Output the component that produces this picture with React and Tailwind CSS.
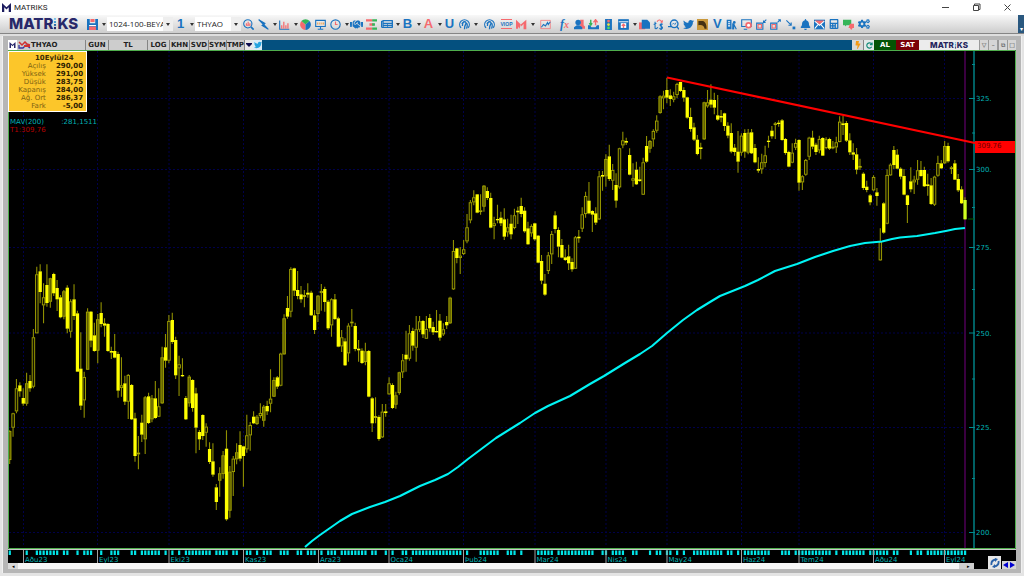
import React from "react";
import { FaTwitter, FaBell, FaCalculator, FaCogs, FaHandshake, FaNewspaper, FaBolt } from "react-icons/fa";

const BLUE = "#1a73c0";
const RED = "#f56a6e";
const GREEN = "#35b558";

/* Each candle: high, body top, body bottom, low, kind (f solid, h hollow, d shaded). Units are thirds of a pixel. */
const SERIES = [
  {
    base: 720,
    data: `571,573,660,672,d 518,520,563,590,h 417,445,514,520,h 427,436,454,470,f 445,474,491,497,f 398,430,491,497,d
405,423,445,455,f 267,292,440,445,h 80,103,280,280,h 73,94,156,190,f 130,172,196,250,h 73,135,189,200,f 113,115,185,203,d
98,102,160,168,f 120,144,178,213,f 165,172,232,235,f 150,154,230,238,d 136,143,266,280,f 178,184,275,293,h 133,178,228,240,f
212,220,395,396,f 277,386,497,510,f 395,411,481,533,h 205,215,389,390,d 213,215,302,322,f 248,286,333,335,f 222,238,332,370,d
187,219,252,262,f 235,250,257,290,f 250,252,333,335,f 320,333,338,357,f 282,333,353,355,f 335,342,452,473,f 352,436,444,470,h
407,430,485,495,f 402,405,485,537,h 432,435,538,540,f 518,535,648,665,f 588,638,643,688,h 524,548,584,606,f 468,472,598,642,d
458,469,549,552,f 465,475,538,547,d 423,475,534,536,f 445,499,530,531,h 320,352,490,492,d 282,322,362,383,f 225,243,362,370,h
218,240,306,312,f 290,300,406,417,f 347,373,385,468,h 355,405,408,410,f 468,474,538,540,f 405,410,490,500,d 418,420,504,515,f
443,460,563,640,f 570,576,598,630,f 523,525,588,600,f 550,560,578,620,h 607,627,666,672,f 610,664,704,710,f 732,742,786,810,f
682,700,722,770,d 633,646,702,716,d 571,626,838,842,f 678,695,812,833,d 648,656,696,768,h 610,637,658,673,d 574,615,656,664,f
617,619,648,740,f 524,586,628,638,h 546,555,586,632,h 514,530,550,552,f`,
  },
  {
    base: 540,
    data: `705,710,732,735,d 670,699,708,715,h 675,680,722,740,d 662,678,694,705,f 568,656,671,697,h 592,600,650,651,d
588,592,620,627,f 518,521,617,619,h 403,415,523,524,d 348,384,410,416,f 262,267,395,412,h 263,265,332,348,f 273,330,348,358,f
318,343,358,368,f 330,346,350,382,f 310,338,344,353,f 332,338,406,408,f 390,406,450,462,f 345,347,402,426,d 312,333,339,392,h
320,327,366,395,f 360,365,445,450,f 355,358,436,470,h 342,358,417,420,f 410,415,500,502,f 450,472,499,516,h 475,484,556,558,f
430,437,520,545,h 387,425,430,440,h 428,438,507,514,f 480,506,511,545,f 505,512,549,552,f 488,514,546,556,d 510,513,650,652,f
652,655,730,756,f 652,709,713,730,f 706,711,777,782,f 672,695,772,774,h 672,694,699,710,f 592,610,643,644,h 610,615,684,687,f
635,646,674,686,d 575,577,639,644,d 522,541,577,594,h 452,524,538,575,f 435,460,536,542,h 443,453,497,512,f 408,448,503,545,h
408,424,449,456,h 420,423,463,474,f 408,447,476,477,h 402,414,445,455,f 425,441,457,465,f 390,453,457,458,f 402,422,473,482,f
430,448,463,468,h 408,426,436,447,f 350,353,430,432,d 180,213,328,330,h 203,205,234,250,f 201,227,234,282,h 180,208,222,225,h
102,142,184,190,h 60,67,121,130,h 31,52,67,76,h 42,43,98,100,f 43,91,96,104,h 15,17,80,95,d 22,33,54,60,f 38,54,143,145,f`,
  },
  {
    base: 210,
    data: `440,460,468,508,h 404,447,451,460,f 425,443,460,468,f 415,448,500,510,f 446,472,487,500,h 434,461,493,508,f
416,436,474,478,h 410,422,427,462,f 383,408,432,442,f 412,422,484,488,f 455,475,523,524,f 463,468,490,500,h 458,460,508,512,f
495,497,578,580,f 555,573,632,643,f 612,641,674,677,f 546,556,603,612,h 483,492,553,582,h 424,436,477,490,f 472,480,530,562,f
507,525,563,565,f 538,562,570,573,f 524,559,580,600,f 565,576,598,605,f 498,502,596,597,h 480,500,505,518,f 412,433,476,486,h
365,378,432,443,h 336,392,430,433,f 421,423,434,486,f 412,430,458,465,f 303,319,448,450,h 303,315,320,362,f 253,267,319,350,d
224,259,327,333,f 282,300,332,360,h 310,345,392,413,f 233,235,352,356,h 185,211,226,235,h 203,213,218,225,f 235,255,314,316,f
280,325,332,350,h 275,299,343,345,f 290,328,333,335,f 263,277,374,375,h 198,228,275,278,f 210,213,236,248,d 178,183,208,230,h
136,152,182,188,h 76,79,129,131,d 62,77,85,118,h 23,60,83,100,f 58,76,87,108,f 65,79,89,97,h 38,42,75,85,h 35,36,63,66,f
52,60,83,95,f 80,82,143,146,f 113,141,177,185,f 158,172,209,213,f 195,209,252,256,f 218,232,237,268,f 95,97,208,210,d`,
  },
  {
    base: 180,
    data: `90,127,139,143,h 73,119,134,143,f 98,120,143,163,f 105,166,179,182,f 150,168,173,187,f 158,160,198,213,f
187,197,227,235,f 190,219,275,280,f 252,263,276,287,f 213,275,305,338,f 220,227,278,287,h 208,219,275,293,f 207,218,278,283,d
207,217,280,282,f 252,264,307,310,f 292,327,332,338,f 281,307,328,341,h 257,286,309,322,h 227,242,246,263,f 198,212,229,236,f
186,190,195,237,h 181,188,192,200,f 177,181,240,242,f 234,237,279,284,f 272,276,320,322,f 250,278,308,310,h 236,249,263,270,h
238,240,368,392,f 346,349,367,390,h 297,300,344,347,h 230,233,290,300,h 212,233,260,268,f 248,254,276,285,f 227,237,271,280,h
232,234,287,288,f 232,238,264,268,h 233,237,266,270,f 243,260,264,268,h 230,247,262,279,h 169,185,246,247,h 168,190,195,225,f
183,189,242,246,f 220,241,277,285,f 250,277,284,300,f 264,283,329,343,f 296,318,323,330,h 337,341,384,390,f 362,380,390,397,f
402,406,427,436,f 346,351,391,394,h 384,397,408,437,f 505,545,601,602,h 427,430,518,521,f 328,345,491,493,h 310,314,346,347,h
258,270,315,327,f 268,284,326,328,f 322,326,350,358,f 327,348,404,406,f 404,406,435,489,f 322,364,388,397,f 347,359,367,402,h
300,331,359,374,h 303,330,348,350,f 320,330,379,381,f 341,373,378,407,f 354,376,432,435,f 347,350,434,438,h 287,309,347,350,h
300,310,325,327,f 243,258,310,312,d 248,258,304,308,f 318,322,327,342,h 300,310,359,360,f 342,357,391,396,f 379,388,430,432,f
412,420,478,479,f`,
  },
];

const CANDLES = SERIES.flatMap(({ base, data }) =>
  data.trim().split(/\s+/).map((item) => {
    const p = item.split(",");
    const y = (n) => (Number(n) + base) / 3;
    return { hi: y(p[0]), top: y(p[1]), bot: y(p[2]), lo: y(p[3]), kind: p[4] };
  })
);

const xAt = (i) => (29 + 10.163 * i) / 3;

/* Runs of sessions marked in the date strip. */
const SESSIONS = [
  [0, 0], [5, 5], [8, 14], [16, 17], [20, 20], [22, 24], [27, 27], [30, 32], [36, 37], [39, 44], [46, 46], [48, 48], [50, 50],
  [52, 59], [61, 64], [66, 67], [70, 71], [73, 73], [75, 77], [80, 82], [85, 86], [88, 90], [92, 92], [94, 96], [98, 105],
  [107, 108], [111, 111], [113, 113], [116, 117], [119, 133], [135, 135], [139, 144], [147, 149], [151, 151], [156, 160],
  [162, 172], [175, 176], [178, 181], [184, 185], [189, 189], [191, 192], [194, 195], [197, 197], [199, 199], [202, 210],
  [212, 213], [215, 215], [217, 224], [228, 230], [232, 242], [244, 244], [246, 252], [254, 259], [261, 262], [266, 266],
  [268, 269], [271, 282],
];
const TICKS = SESSIONS.flatMap(([a, b]) => Array.from({ length: b - a + 1 }, (_, k) => a + k));

const MONTHS = [
  [23.5, "Aðu23"], [97.5, "Eyl23"], [169, "Eki23"], [243.5, "Kas23"], [318.5, "Ara23"], [389, "Oca24"], [463.5, "Þub24"],
  [535, "Mar24"], [606, "Nis24"], [667, "May24"], [741.5, "Haz24"], [799, "Tem24"], [873.5, "Aðu24"], [944.5, "Eyl24"],
];
const LEVELS = [[98.5, "325."], [169.5, "300."], [247.5, "275."], [333, "250."], [427.5, "225."], [532.5, "200."]];
const MINOR = [64.5, 133, 207.5, 289.5, 379, 478.5];

function Chart() {
  return (
    <svg viewBox="8 50 1008 513" className="block h-auto w-full bg-black" role="img" aria-label="THYAO günlük grafik">
      <g stroke="#00004a" strokeWidth="1" strokeDasharray="2 2">
        {MONTHS.map(([x]) => <path key={x} d={`M${x} 51V547`} />)}
        {LEVELS.map(([y]) => <path key={y} d={`M9 ${y}H965`} />)}
      </g>
      <path d="M965 51V548" stroke="#3a0040" strokeWidth="2" />
      <g stroke="#008a8f" strokeWidth="1">
        <path d="M974 51V548" strokeWidth="1.4" />
        {LEVELS.map(([y]) => <path key={y} d={`M969 ${y}H975`} />)}
        {MINOR.map((y) => <path key={y} d={`M972 ${y}H975`} />)}
      </g>
      <g fill="#00b4b6" fontSize="7" fontFamily='"DejaVu Sans", sans-serif'>
        {LEVELS.map(([y, t]) => <text key={t} x="976" y={y + 2.5}>{t}</text>)}
      </g>
      {CANDLES.map((c, i) => {
        const x = xAt(i);
        const solid = c.kind === "f";
        const last = i === CANDLES.length - 1;
        const h = Math.max(c.bot - c.top, 1.3);
        return (
          <g key={i}>
            <path d={`M${x} ${c.hi}V${c.top}M${x} ${c.bot}V${c.lo}`} stroke="#8f8f00" strokeWidth="1.1" />
            {solid ? (
              <rect x={x - 1.6} y={c.top} width="3.3" height={h} fill={last ? "#cfff20" : "#ffff00"} />
            ) : (
              <rect x={x - 1.2} y={c.top + 0.4} width="2.5" height={Math.max(h - 0.8, 0.8)} fill={c.kind === "d" ? "#606000" : "#141400"} stroke="#a8a800" strokeWidth="0.9" />
            )}
          </g>
        );
      })}
      <path d="M968 219H974" stroke="#006000" />
      <polyline
        points="305,547 312,541 320,535 330,528 340,521 352,514 370,507 385,502 400,496 420,486 435,480 448,474 458,467 468,459 480,450 496,438 520,423 535,413 548,406 570,396 590,384 604,376 625,363 640,354 652,346 667,333 683,320 697,310 710,302 720,296 730,292 745,286 758,280 775,271 797,264 815,257 833,251 850,246 865,243 882,241.5 892,239 900,237.5 917,236 935,233 947,230.7 955,229 965,228"
        fill="none"
        stroke="#00f4f4"
        strokeWidth="2.1"
        strokeLinejoin="round"
      />
      <path d="M667 77.5L975 143" stroke="#ff0000" strokeWidth="2.2" />
      <rect x="975" y="141" width="40" height="12" fill="#ff0000" />
      <text x="977" y="148" fontSize="7" fill="#6b0000" fontFamily='"DejaVu Sans", sans-serif'>309.76</text>
      <path d="M8.5 50V548.5H1015.5V50.5H8.5" fill="none" stroke="#4fae4c" />
      <path d="M8 549.5H1016" stroke="#c8c8c8" />
      <g fill="#00e5e8">
        {TICKS.map((i) => <rect key={i} x={xAt(i) - 1} y="550.5" width="2.2" height="4.5" />)}
      </g>
      <g stroke="#a0a0a0">
        {MONTHS.map(([x]) => <path key={x} d={`M${x} 550V563`} />)}
      </g>
      <g fill="#00b4b6" fontSize="7" fontFamily='"DejaVu Sans", sans-serif'>
        {MONTHS.map(([x, t]) => <text key={x} x={x + 1.5} y="561.5">{t}</text>)}
      </g>
    </svg>
  );
}

const Caret = () => (
  <svg viewBox="0 0 4 3" className="h-[3px] w-1" aria-hidden="true"><path d="M0 0H4L2 3Z" fill="#333" /></svg>
);

function Tool({ label, caret, children }) {
  return (
    <button type="button" aria-label={label} className={caret ? "flex h-4 w-[21px] shrink-0 items-center justify-between" : "flex h-4 w-[15px] min-w-[14px] items-center justify-center"}>
      <span className={caret ? "flex w-[15px] justify-center" : "flex justify-center"}>{children}</span>
      {caret && <Caret />}
    </button>
  );
}

const Ic = ({ children }) => (
  <svg viewBox="0 0 16 16" className="h-[11px] w-[11px] shrink-0" fill="none" stroke={BLUE} strokeWidth="1.6" aria-hidden="true">{children}</svg>
);
const Letter = ({ children, red }) => (
  <span className={red ? "font-['Liberation_Sans',sans-serif] text-[13px] font-bold leading-4 text-[#f56a6e]" : "font-['Liberation_Sans',sans-serif] text-[13px] font-bold leading-4 text-[#1a73c0]"}>{children}</span>
);
const Pulse = () => (
  <Ic>
    <path d="M3 13A7 7 0 1 1 13 13" strokeWidth="1.8" />
    <path d="M5 10C5 6 6 4 8 4S11 6 9.5 8S8 11 8 15M11 6C13 8 12 11 11 14M4 7L6 5" strokeWidth="1.9" />
  </Ic>
);

function Logo({ small }) {
  return (
    <span aria-label="MATRIKS" className={small ? "flex items-center font-['Inter',sans-serif] text-[8px] font-extrabold leading-[10px] text-[#24245c]" : "flex items-center font-['Inter',sans-serif] text-[15px] font-extrabold leading-4 text-[#28286a]"}>
      <span>MATR</span>
      <svg viewBox="0 0 4 14" className={small ? "h-[7px] w-[3px]" : "h-3 w-1"} aria-hidden="true">
        <rect x="0.8" y="0" width="2.4" height="2.2" fill="#7fc4ea" /><rect x="0.8" y="3.6" width="2.4" height="2.2" fill="#3d9bd6" />
        <rect x="0.8" y="7" width="2.4" height="2.2" fill="#2469a8" /><rect x="0.8" y="10.4" width="2.4" height="2.6" fill="#28286a" />
      </svg>
      <span>KS</span>
    </span>
  );
}

const MMark = ({ className, fill }) => (
  <svg viewBox="0 0 12 12" className={className} aria-hidden="true"><path d="M0 12V0L6 5.5L12 0V12H9V5.5L6 8.5L3 5.5V12Z" fill={fill} /></svg>
);

function Toolbar() {
  return (
    <div role="toolbar" aria-label="Araçlar" className="flex h-[19px] items-center border-b border-[#858585] bg-linear-to-b from-[#f8f8f8] to-[#cdcdcd] pl-[9px]">
      <div className="w-[76px] shrink-0"><Logo /></div>
      <Tool label="Kaydet" caret>
        <Ic><path d="M0 0H4V6H12V0H16V16H0Z" fill={BLUE} stroke="none" /><path d="M5 0H11V4.5H5ZM3 11H13V16H3Z" fill={RED} stroke="none" /><path d="M3 9.5H13" stroke="#fff" /></Ic>
      </Tool>
      <label className="ml-px flex h-[14px] w-[66px] shrink-0 items-center bg-white">
        <select aria-label="Sayfa" className="h-full w-[56px] appearance-none overflow-hidden pl-[2px] font-['Open_Sans',sans-serif] text-[8px] leading-[14px] text-[#222]"><option>1024-100-BEYAZ</option></select>
        <span className="flex h-full w-[10px] items-center justify-center bg-[#eeeeee]"><Caret /></span>
      </label>
      <Tool label="Pencere 1" caret><Letter>1</Letter></Tool>
      <label className="ml-px flex h-[14px] w-[46px] shrink-0 items-center bg-white">
        <select aria-label="Sembol" className="h-full w-9 appearance-none pl-[2px] font-['Open_Sans',sans-serif] text-[8px] leading-[14px] text-[#222]"><option>THYAO</option></select>
        <span className="flex h-full w-[10px] items-center justify-center bg-[#eeeeee]"><Caret /></span>
      </label>
      <Tool label="Ara"><Ic><circle cx="7" cy="7" r="6" /><path d="M11.5 11.5L15.5 15.5" strokeWidth="2.4" /><path d="M5 9V6M7.5 9V4M10 9V6M4 9H11" stroke={RED} /></Ic></Tool>
      <Tool label="Hızlı emir" caret><Ic><path d="M1 1L10 6.5L8.5 8L15 15L6 9.5L8 8Z" fill={BLUE} /></Ic></Tool>
      <Tool label="Grafik" caret><Ic><path d="M1 2V15H15" /><path d="M4 14V9M7 14V4M10 14V9M13 14V6" stroke={RED} strokeWidth="1.8" /></Ic></Tool>
      <Tool label="Pasta grafik"><Ic><path d="M8 8L2 3A8 8 0 0 0 8 16Z" fill={RED} stroke="none" /><path d="M8 8L2 3A8 8 0 0 1 14 3Z" fill={GREEN} stroke="none" /><path d="M8 8L14 3A8 8 0 0 1 8 16Z" fill={BLUE} stroke="none" /></Ic></Tool>
      <Tool label="Ekran"><Ic><path d="M1 2H15V11H1ZM8 11V14M4 15H12" /><path d="M4 5V8M7 5V8M10 5V8M12.5 5V8" stroke="#f4a24a" /></Ic></Tool>
      <Tool label="Saat" caret><Ic><circle cx="8" cy="8" r="6.8" /><path d="M8 3.5V8H11" stroke={RED} strokeWidth="1.7" /></Ic></Tool>
      <Tool label="Takas"><FaHandshake size={13} color={BLUE} /></Tool>
      <Tool label="Derinlik"><Ic><path d="M0 2H9M5 8H11M0 14H9" stroke={RED} strokeWidth="3.6" /><path d="M9 2H16M9 8H13M9 14H16" stroke={GREEN} strokeWidth="3.6" /></Ic></Tool>
      <Tool label="Haberler" caret><FaNewspaper size={12} color={BLUE} /></Tool>
      <Tool label="B" caret><Letter>B</Letter></Tool>
      <Tool label="A" caret><Letter red>A</Letter></Tool>
      <div className="flex w-[38px] shrink-0"><Tool label="U"><Letter>U</Letter></Tool><Tool label="Analiz" caret><Pulse /></Tool></div>
      <div className="flex w-[19px] shrink-0 justify-center"><Tool label="Analiz 2"><Pulse /></Tool></div>
      <Tool label="VIOP"><span className="border-y border-[#f56a6e] font-['Liberation_Sans',sans-serif] text-[5px] font-bold leading-[8px] text-[#1a73c0]">VIOP</span></Tool>
      <Tool label="Matriks" caret><Ic><path d="M0 14V1L7 8L5 14L3 11V14Z" fill={RED} stroke="none" /><path d="M7 8L15 1V15H11V7L8 11Z" fill={RED} stroke="none" /></Ic></Tool>
      <div className="ml-[3px] flex w-[19px] shrink-0"><Tool label="Çizgi grafik"><Ic><path d="M1 2H15V14H1Z" stroke={RED} strokeWidth="1" /><path d="M2 12L5 8L8 10L11 5L12 8L15 4" /></Ic></Tool></div>
      <Tool label="Formül"><span className="font-['Liberation_Serif',serif] text-[12px] font-bold italic leading-4 text-[#1a73c0]">f<span className="text-[10px] text-[#f56a6e]">x</span></span></Tool>
      <div className="flex w-[299px] shrink-0 justify-between">
        <Tool label="Kişiler"><Ic><path d="M9 1H14V9L16 11V14H9Z" fill={RED} stroke="none" /><circle cx="6" cy="5" r="4" fill={BLUE} stroke="none" /><path d="M0 15V12L4 9H8L12 12V15Z" fill={BLUE} stroke="none" /></Ic></Tool>
        <Tool label="Veri al"><Ic><path d="M0 9V15H16V9H13L11 12H5L3 9Z" fill={BLUE} stroke="none" /><path d="M4 1V9M2 6L4 9L6 6" stroke={GREEN} strokeWidth="2" /><path d="M11 9V2M8 5L11 1L14 5" stroke={RED} strokeWidth="2" /></Ic></Tool>
        <Tool label="Sinyal"><Ic><rect x="3" y="0" width="10" height="16" fill={BLUE} stroke="none" /><circle cx="8" cy="3" r="2" fill={RED} stroke="none" /><circle cx="8" cy="8" r="2" fill="#f3e13b" stroke="none" /><circle cx="8" cy="13" r="2" fill="#4fdc5a" stroke="none" /></Ic></Tool>
        <Tool label="Gönder" caret><Ic><path d="M1 1H15V15H1Z" fill={BLUE} /><path d="M1 4H15" stroke="#dfe9f4" /><path d="M4 6H12V13H4Z" fill="#fff" stroke="none" /><path d="M8 13V8M5.5 10L8 7.5L10.5 10" stroke={RED} strokeWidth="2" /></Ic></Tool>
        <Tool label="Kopyala"><Ic><path d="M0 5H9V15H0Z" fill={RED} stroke="none" /><path d="M4 1H12L16 5V14H4Z" fill={BLUE} stroke="none" /></Ic></Tool>
        <Tool label="Döviz">
          <Ic><path d="M3 4V13C3 15 6 14 7 12M1 8L5 6M14 8C12 6 9 8 11 10S15 12 13 14S10 14 9.5 13M12 6V16" /><path d="M6 4C8 0 12 1 13 5M11 4L13 5L14 2" stroke={RED} /></Ic>
        </Tool>
        <Tool label="Bul"><Ic><circle cx="9" cy="7" r="5.5" strokeWidth="2" /><path d="M13 11L16 15M0 11H5" strokeWidth="2" /><path d="M6 8L8 6L10 8L12 5" strokeWidth="1.2" /></Ic></Tool>
        <Tool label="Twitter"><FaTwitter size={11} color={BLUE} /></Tool>
        <Tool label="Altın"><Ic><rect x="0" y="0" width="16" height="16" fill="#c9983b" stroke="none" /><path d="M2 3H9C12 4 14 8 14 14H11C10 10 8 8 2 9Z" fill="#453112" stroke="none" /></Ic></Tool>
        <Tool label="V"><Letter>V</Letter></Tool>
        <Tool label="Kurum"><Ic><path d="M1 1H8V15H1ZM9 6H12V15H9Z" fill={BLUE} stroke="none" /><path d="M3 4H6M3 7H6M3 10H6" stroke="#fff" /><circle cx="12" cy="5" r="2" fill={BLUE} stroke="none" /><path d="M10 15L12 9L15 15" /></Ic></Tool>
        <Tool label="Ekran ayarları"><Ic><path d="M1 1H15V11H1ZM4 15H9" /><circle cx="11" cy="9" r="3.5" stroke={RED} strokeWidth="2.5" fill="#fff" /></Ic></Tool>
        <Tool label="Küçült"><Ic><path d="M1 6H10V15H1Z" /><path d="M3 8H8V13H3Z" stroke={RED} /><path d="M15 1L11 5M11 2V5H14" /></Ic></Tool>
        <Tool label="Büyüt"><Ic><path d="M1 6H10V15H1Z" /><path d="M3 8H8V13H3Z" stroke={RED} /><path d="M11 5L15 1M12 1H15V4" /></Ic></Tool>
        <Tool label="Taşı"><Ic><path d="M2 2L9 9M9 5V9H5" /><rect x="11" y="11" width="4" height="4" fill={BLUE} stroke="none" /></Ic></Tool>
        <Tool label="Alarm"><FaBell size={11} color={BLUE} /></Tool>
        <Tool label="Posta"><Ic><rect x="0" y="1" width="16" height="14" fill={BLUE} stroke="none" /><path d="M1 2H15L8 8Z" fill={RED} stroke="none" /><path d="M1 3L8 9L15 3M1 14L6 8M15 14L10 8" stroke="#fff" /></Ic></Tool>
        <Tool label="Hesap makinesi"><FaCalculator size={10} color={BLUE} /></Tool>
        <Tool label="Sohbet"><Ic><path d="M0 1H12V9H5L3 11V9H0Z" fill={GREEN} stroke="none" /><path d="M10 7H16V13H14L12 16L10 13H8Z" fill={RED} stroke="none" /></Ic></Tool>
        <Tool label="Ayarlar"><FaCogs size={12} color={BLUE} /></Tool>
      </div>
      <div className="ml-auto flex h-[18px] w-[6px] items-end justify-center bg-[#2a587f] text-[6px] leading-[8px] text-white">▾</div>
    </div>
  );
}

const CELLS = [
  ["GUN", "w-[23px]"], ["TL", "w-[39px]"], ["LOG", "w-[22px]"], ["KHN", "w-5"], ["SVD", "w-[19px]"], ["SYM", "w-[18px]"], ["TMP", "w-[18px]"],
];

function ChartHeader() {
  return (
    <header className="flex h-[10px] bg-[#04507f] font-['DejaVu_Sans',sans-serif] text-[7px] font-bold leading-[10px] text-[#222]">
      <div className="flex w-[77px] items-center bg-[#cdcdcd]">
        <span className="flex h-full w-[9px] items-center justify-center bg-white"><MMark className="h-[6px] w-[7px]" fill="#28286a" /></span>
        <svg viewBox="0 0 13 8" className="ml-px h-2 w-[13px]" fill="none" aria-hidden="true">
          <path d="M1 1L4 4L7 1L9 3L12 4" stroke="#d03030" strokeWidth="1.5" /><path d="M1 4V7H5L8 4L12 7" stroke="#3434a0" strokeWidth="1.3" /><path d="M6 5H12" stroke="#d03030" strokeWidth="2" />
        </svg>
        <span>THYAO</span>
      </div>
      {CELLS.map(([t, w]) => (
        <button key={t} type="button" className={`${w} border-l border-[#858585] bg-[#cdcdcd] text-center`}>{t}</button>
      ))}
      <button type="button" aria-label="Menü" className="flex w-[9px] items-center justify-center border-l border-[#858585] bg-[#e8e8e8]"><svg viewBox="0 0 6 4" className="h-1 w-[6px]"><path d="M0 0H6V1L3 4L0 1Z" fill="#0c0c50" /></svg></button>
      <button type="button" aria-label="Paylaş" className="flex w-[9px] items-center justify-center bg-[#dcebf5]"><FaTwitter size={8} color="#25a3df" /></button>
      <div className="ml-auto flex">
        <button type="button" aria-label="Hızlı" className="flex w-[11px] items-center justify-center bg-[#d8d8d8]"><FaBolt size={8} color="#f39a14" /></button>
        <button type="button" aria-label="Yenile" className="flex w-[11px] items-center justify-center border-l border-[#858585] bg-[#e0e8e6]">
          <svg viewBox="0 0 8 8" className="h-[7px] w-[7px]" fill="none"><path d="M6.5 2.5A3 3 0 1 0 6.5 5.5M4.5 3H7V0.5" stroke="#128a78" strokeWidth="1.3" /></svg>
        </button>
        <button type="button" className="w-[22px] bg-[#045404] text-center text-white">AL</button>
        <button type="button" className="w-[23px] bg-[#7a0008] text-center text-white">SAT</button>
        <div className="flex w-[60px] items-center justify-center bg-[#ececec]"><Logo small /></div>
        <div className="flex w-[37px] justify-between bg-[#9a9a9a] pl-px">
          {["▽", "–", "⧉", "□"].map((s) => (
            <button key={s} type="button" className="flex w-2 items-center justify-center bg-[#d6d6d6] text-[6px] font-normal leading-[8px] text-[#444]">{s}</button>
          ))}
        </div>
      </div>
    </header>
  );
}

const QUOTE = [["Açılış", "290,00"], ["Yüksek", "291,00"], ["Düşük", "283,75"], ["Kapanış", "284,00"], ["Ağ. Ort", "286,37"], ["Fark", "-5,00"]];

function QuoteBox() {
  return (
    <div className="absolute left-0 top-px font-['DejaVu_Sans',sans-serif] text-[7px] leading-[8px]">
      <table className="w-[79px] border-separate border-spacing-0 border border-white bg-[#fcc62a] pb-px">
        <thead><tr><th colSpan={2} className="h-[10px] p-0 pl-[26px] pt-[2px] text-left font-bold text-[#3c2c00]">10Eylül24</th></tr></thead>
        <tbody>
          {QUOTE.map(([k, v]) => (
            <tr key={k}>
              <th scope="row" className="h-2 p-0 text-right font-normal text-[#806414]">{k}</th>
              <td className="h-2 p-0 pr-[3px] text-right font-bold text-[#2c2000]">{v}</td>
            </tr>
          ))}
        </tbody>
      </table>
      <p className="mt-[6px] flex w-[89px] justify-between pl-[2px] leading-[8px] text-[#00b0b4]"><span>MAV(200)</span><span>:281,1511</span></p>
      <p className="pl-[2px] leading-[8px] text-[#b80000]">T1:309,76</p>
    </div>
  );
}

export default function App() {
  return (
    <div className="flex min-h-screen flex-col bg-[#e4e4e4]">
      <div className="flex h-[15px] items-center bg-white pl-[2px] pr-[12px]">
        <MMark className="h-[9px] w-[9px]" fill="#1c1c60" />
        <h1 className="ml-[3px] font-['Roboto',sans-serif] text-[8px] leading-[14px] text-[#222]">MATRIKS</h1>
        <div className="ml-auto flex gap-[22px]">
          <button type="button" aria-label="Simge durumuna küçült"><svg viewBox="0 0 9 9" className="h-[9px] w-[9px]" stroke="#444" fill="none"><path d="M1 4.5H8" /></svg></button>
          <button type="button" aria-label="Geri yükle"><svg viewBox="0 0 9 9" className="h-[9px] w-[9px]" stroke="#444" fill="none"><path d="M1.5 2.5H6.5V7.5H1.5ZM2.5 2V1H8V6.5H7" /></svg></button>
          <button type="button" aria-label="Kapat"><svg viewBox="0 0 9 9" className="h-[9px] w-[9px]" stroke="#444" fill="none"><path d="M1.5 1.5L7.5 7.5M7.5 1.5L1.5 7.5" /></svg></button>
        </div>
      </div>
      <Toolbar />
      <div className="h-[2px] bg-[#dedede]" />
      <main className="mx-[2px] border-x border-[#f0f0f0] bg-[#b6b6b6] px-[5px] pb-1 pt-1">
        <ChartHeader />
        <div className="relative">
          <Chart />
          <QuoteBox />
        </div>
        <div className="flex h-[6px]">
          <div className="flex flex-1 justify-between bg-[#f6f6f6]">
            <button type="button" aria-label="Sola kaydır" className="w-[10px] bg-[#d8d8d8] text-[5px] leading-[6px]">◂</button>
            <button type="button" aria-label="Sağa kaydır" className="w-[15px] bg-[#cfcfcf] pl-1 text-[5px] leading-[6px]">▸</button>
          </div>
          <div className="relative w-[42px] bg-black">
            <button type="button" aria-label="Güncelle" className="absolute bottom-0 left-[14px] flex h-[13px] w-[13px] items-center justify-center bg-[#e6e6e6]">
              <svg viewBox="0 0 10 10" className="h-[10px] w-[10px]" fill="none" stroke="#2860a8" strokeWidth="1.8"><path d="M1.5 7C1 4 3 2 5.5 1.5M8.5 3C9 6 7 8 4.5 8.5" /><path d="M5 0L8 1L5 4ZM5 6V10L2 9Z" fill="#2860a8" stroke="none" /></svg>
            </button>
            <button type="button" aria-label="Önceki ve sonraki" className="absolute bottom-0 right-0 flex h-2 w-[14px] items-center justify-center bg-[#d4d4d4]">
              <svg viewBox="0 0 14 8" className="h-2 w-[14px]" fill="#0000d0"><path d="M6 1V7L1 4ZM8 1V7L13 4Z" /></svg>
            </button>
          </div>
        </div>
      </main>
    </div>
  );
}
